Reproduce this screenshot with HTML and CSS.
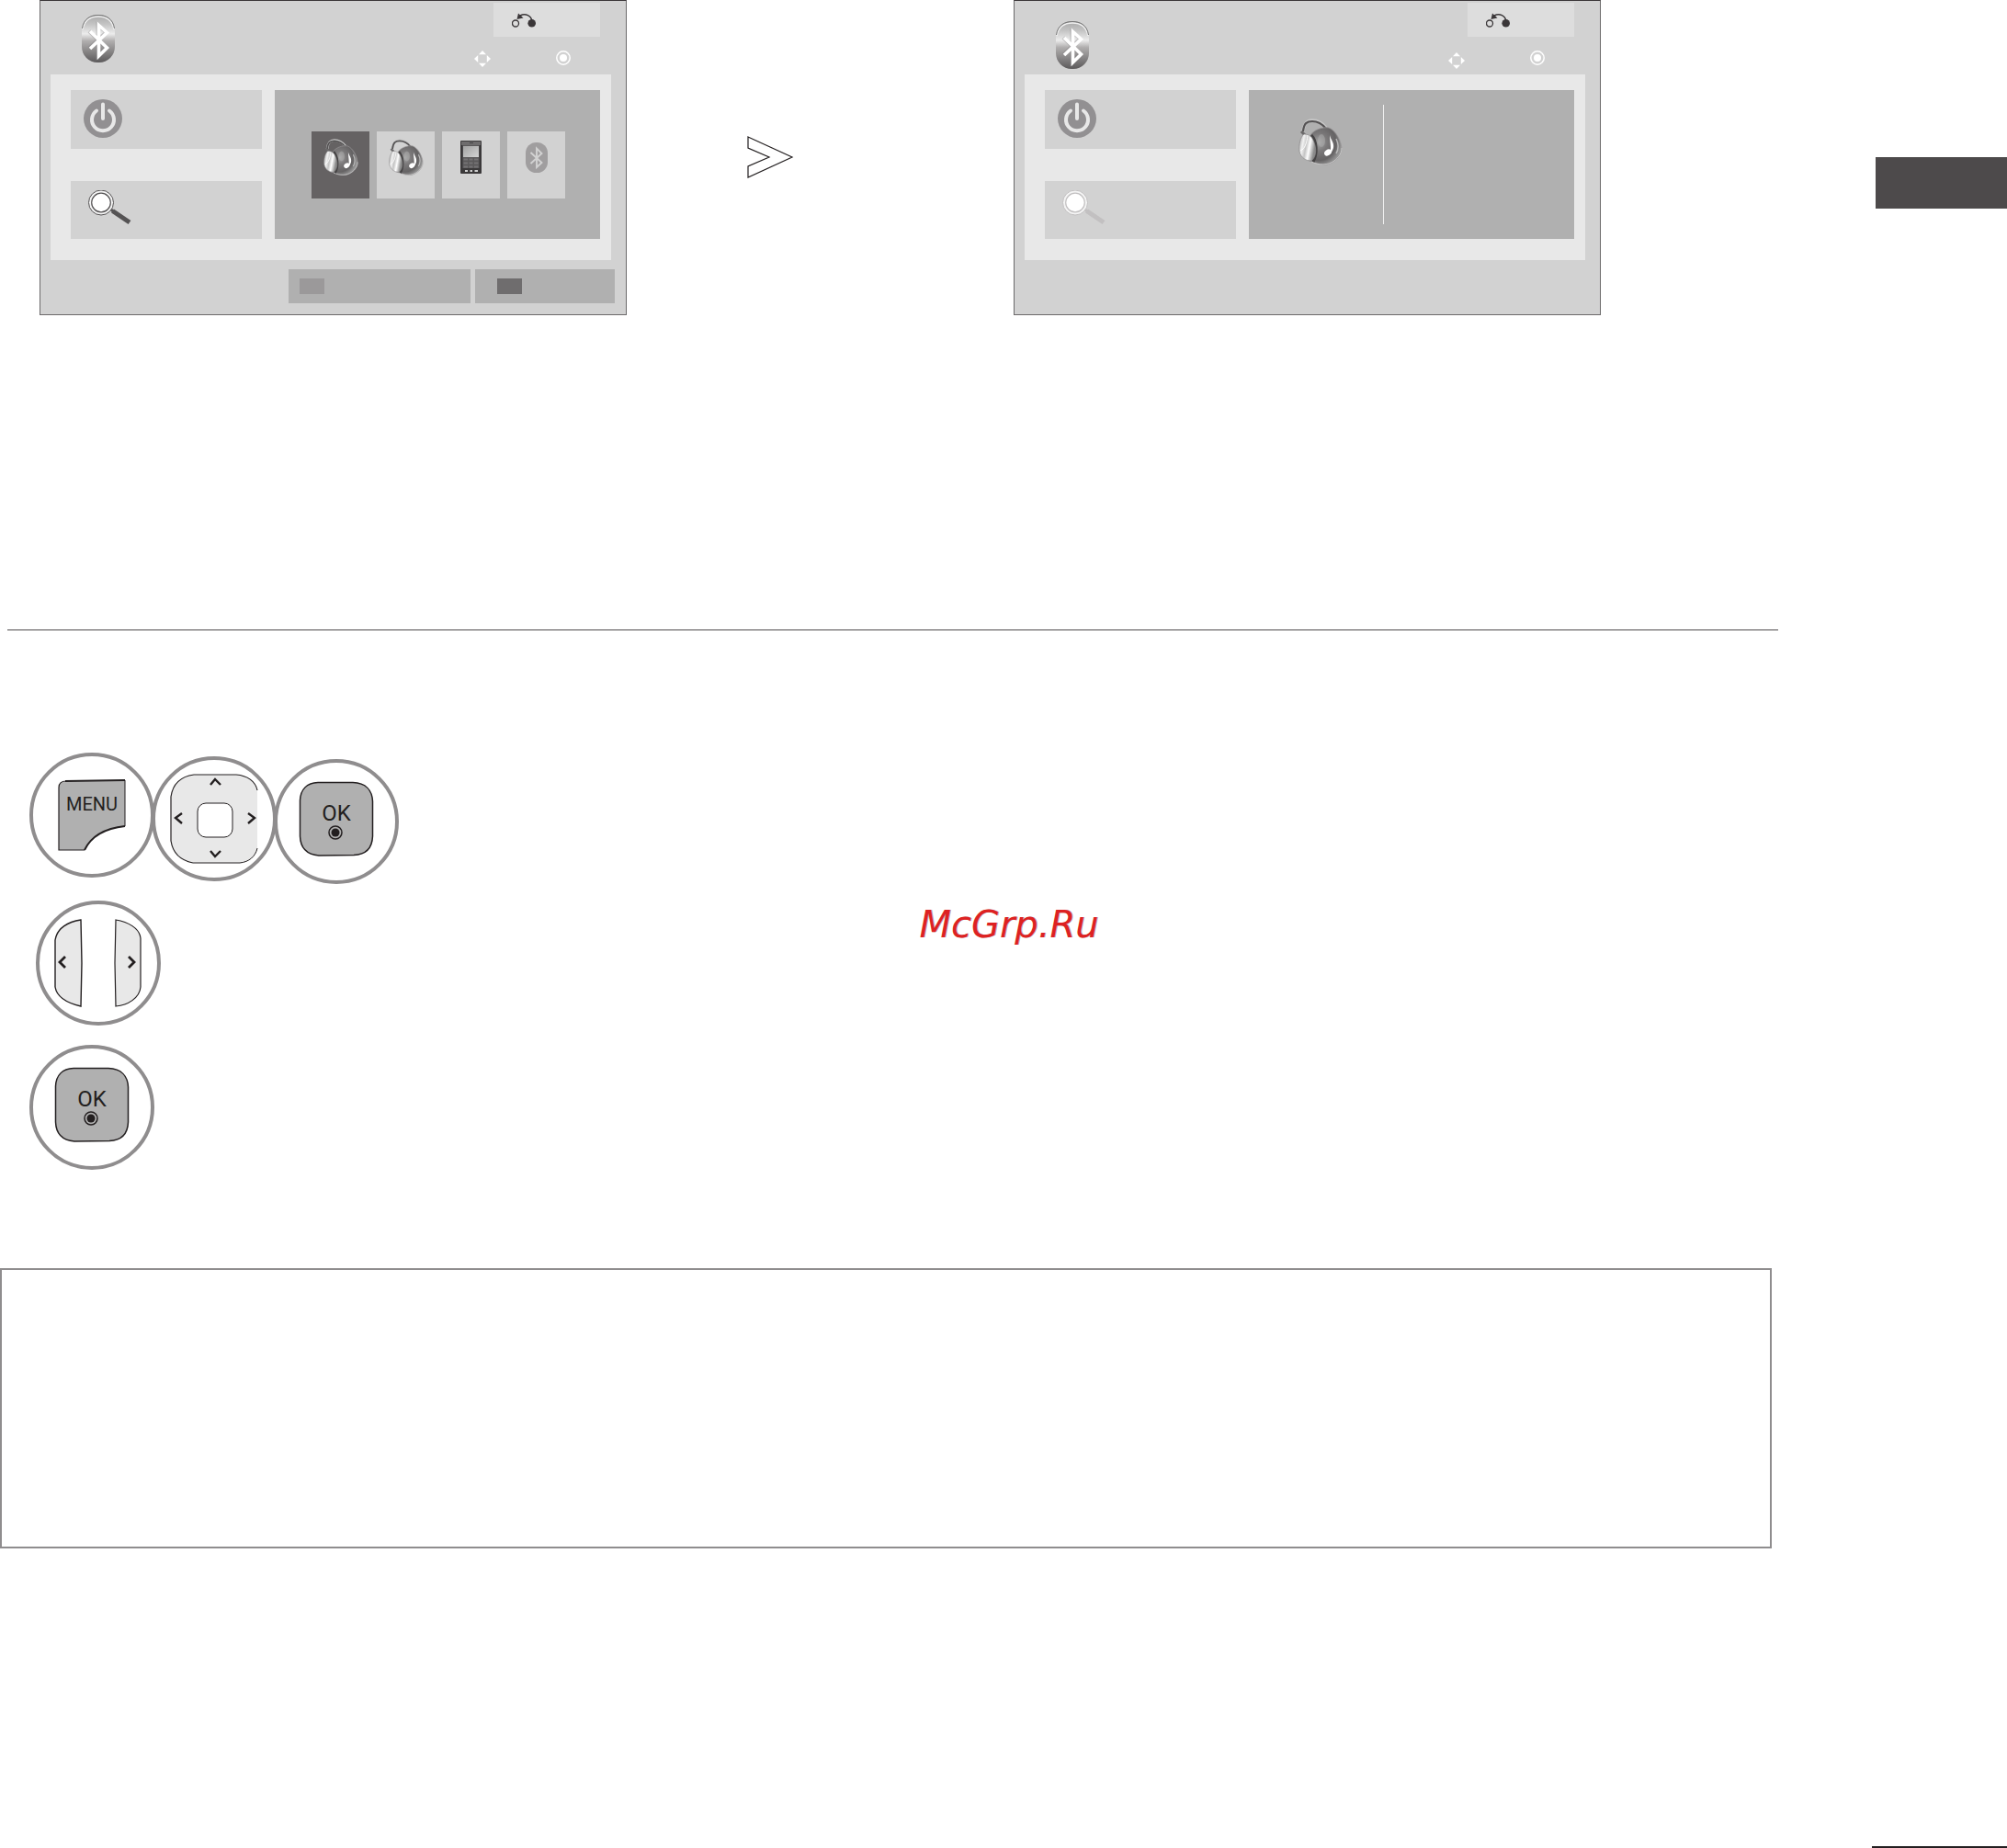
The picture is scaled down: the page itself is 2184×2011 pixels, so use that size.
FILE: index.html
```html
<!DOCTYPE html>
<html lang="en">
  <head>
    <meta charset="UTF-8" />
    <meta name="viewport" content="width=device-width, initial-scale=1.0" />
    <title>Bluetooth</title>
    <link rel="stylesheet" href="styles.css">
  </head>

  <body>
    <!-- Shared icons -->
    <svg class="icon-defs" width="0" height="0" aria-hidden="true">
      <defs>
        <linearGradient id="pill" x1="0" y1="0" x2="0" y2="1">
          <stop offset="0" stop-color="#a8a8a8" />
          <stop offset="0.2" stop-color="#c4c4c4" />
          <stop offset="0.4" stop-color="#ececec" />
          <stop offset="0.55" stop-color="#b0aeae" />
          <stop offset="1" stop-color="#5c5a5b" />
        </linearGradient>
        <radialGradient id="ball" cx="0.35" cy="0.4" r="0.65">
          <stop offset="0" stop-color="#a5a5a5" />
          <stop offset="0.35" stop-color="#7c7a7b" />
          <stop offset="0.75" stop-color="#656364" />
          <stop offset="1" stop-color="#989898" />
        </radialGradient>
        <linearGradient id="cup" x1="0" y1="0" x2="1" y2="0.3">
          <stop offset="0" stop-color="#a0a0a0" />
          <stop offset="0.3" stop-color="#f2f2f2" />
          <stop offset="0.5" stop-color="#c4c4c4" />
          <stop offset="0.7" stop-color="#ffffff" />
          <stop offset="1" stop-color="#8a8a8a" />
        </linearGradient>
        <linearGradient id="glass" x1="0" y1="0" x2="1" y2="1">
          <stop offset="0" stop-color="#a2a2a2" />
          <stop offset="1" stop-color="#d4d4d4" />
        </linearGradient>
        <symbol id="bluetooth" viewBox="0 0 36 52">
          <rect width="36" height="52" rx="17" fill="url(#pill)" />
          <path d="M1 16C3 5 10 2 18 2S33 5 35 16" fill="none" stroke="#f0f0f0" stroke-width="1.5" />
          <path d="M0.500 15C2 4 10 0.500 18 0.500S34 4 35.500 15" fill="none" stroke="#777" stroke-width="1" />
          <path d="M8 36.500L26.500 19 17.500 11.500V45L26.500 35.500 8 18" fill="none" stroke="#8a8889" stroke-width="4" opacity="0.4" />
          <path d="M9 37L27.500 19.500 18.500 11.500V45L27.500 36 9 18" fill="none" stroke="#fff" stroke-width="3.600" />
        </symbol>
        <symbol id="bluetooth-flat" viewBox="0 0 24 33">
          <rect width="24" height="33" rx="11.500" fill="#a09e9f" />
          <path d="M5.500 23L17.500 12 12 6.500V27L17.500 22 5.500 11" fill="none" stroke="#d2d2d2" stroke-width="1.900" />
        </symbol>
        <symbol id="headphones" viewBox="0 0 48 52">
          <path d="M5 14C6 5 9 2 15 2C22 2 26 5 30 10" fill="none" stroke="#c8c8c8" stroke-width="3.400" />
          <path d="M5 14C6 5 9 3 15 3C22 3 26 6 30 11" fill="none" stroke="#555354" stroke-width="2.200" />
          <path d="M13 18C17 12 26 9 33 10C41 13 47 25 47 34C46 42 39 48 31 50C23 51 15 47 9 45Z" fill="url(#ball)" stroke="#9a9899" stroke-width="0.800" />
          <path d="M14 47C22 51 32 51 39 46C44 42 47 38 47 32" fill="none" stroke="#cfcfcf" stroke-width="0.800" />
          <ellipse cx="25" cy="24" rx="4" ry="7" fill="#b4b4b4" opacity="0.450" />
          <path d="M14 18C20 24 21 38 16 47" fill="none" stroke="#454344" stroke-width="3" />
          <path d="M3 14L7 18" stroke="#6a6869" stroke-width="3" />
          <path d="M6 17C2 20 0 29 1 36C3 43 8 46 14 46C19 42 20 34 17 26C15 20 12 17 6 17Z" fill="url(#cup)" stroke="#8d8b8c" stroke-width="0.700" />
          <path d="M2 35C7 33 9 27 10 18" fill="none" stroke="#fff" stroke-width="1" />
          <path d="M41 22C44 28 44 33 41 38" fill="none" stroke="#b8b8b8" stroke-width="1.500" />
          <ellipse cx="32" cy="37" rx="4.200" ry="3.200" transform="rotate(-35 32 37)" fill="#fff" />
          <path d="M34 18C35 23 39 26 38 32C37 35 36 37 34.500 38C36 31 34 25 34 18Z" fill="#fff" />
        </symbol>
        <symbol id="phone" viewBox="0 0 23 36">
          <rect width="23" height="36" rx="1" fill="#3b393a" />
          <rect x="1" y="1" width="21" height="4" fill="#6e6c6d" />
          <rect x="2.500" y="5" width="18" height="25" fill="#5b595a" />
          <rect x="3" y="6" width="17" height="12" fill="url(#glass)" />
          <path d="M3.500 20.500H8M9.500 20.500H13.500M15 20.500H19.500M3.500 24.500H8M9.500 24.500H13.500M15 24.500H19.500M3.500 28.500H8M9.500 28.500H13.500M15 28.500H19.500" stroke="#757374" stroke-width="2" />
          <path d="M10 2.500H14" stroke="#444" stroke-width="1" />
          <path d="M5 33H8M10.500 33H13M15.500 33H19" stroke="#fff" stroke-width="1.400" />
        </symbol>
        <symbol id="power" viewBox="0 0 42 42">
          <circle cx="21" cy="21" r="21" fill="#929092" />
          <path d="M14 12.500A12 12 0 1 0 28 12.500M21 5.500V21" fill="none" stroke="#e8e8e8" stroke-width="4" stroke-linecap="round" />
        </symbol>
        <symbol id="search" viewBox="0 0 48 38">
          <path d="M25 20L28 23" stroke="currentColor" stroke-width="3" />
          <path d="M27.500 22.500L46 35" stroke="currentColor" stroke-width="5" />
          <circle cx="15" cy="13.500" r="13.500" fill="#f4f4f4" stroke="currentColor" stroke-width="1" />
          <circle cx="15" cy="13.500" r="10.300" fill="#fff" stroke="currentColor" stroke-width="1.200" />
        </symbol>
        <symbol id="return" viewBox="0 0 26 16">
          <circle cx="4" cy="11.500" r="3.500" fill="none" stroke="#3a3638" stroke-width="1.300" />
          <circle cx="21.700" cy="11.300" r="4.300" fill="#3a3638" />
          <path d="M22 9C21 3 15 0 9 3" fill="none" stroke="#3a3638" stroke-width="1.500" />
          <path d="M5.500 7L7 0.500 12.500 5.500Z" fill="#3a3638" />
        </symbol>
        <symbol id="move" viewBox="0 0 18 18">
          <path d="M9 0L13 4.200H5ZM9 18L5 13.800H13ZM0 9L4.200 5V13ZM18 9L13.800 13V5Z" fill="#fff" />
        </symbol>
        <symbol id="enter" viewBox="0 0 16 16">
          <circle cx="8" cy="8" r="7.200" fill="none" stroke="#fff" stroke-width="1.500" />
          <circle cx="8" cy="8" r="4" fill="#fff" />
        </symbol>
        <symbol id="ok-shape" viewBox="0 0 82 82">
          <path d="M21 1.500H59C73 2 80 10 80.500 22V60C80 73 73 80 60 80.500L22 81C10 80 2 74 1.500 60V21C2 9 9 2 21 1.500Z" fill="#b0b0b0" stroke="#231f20" stroke-width="1.500" />
          <circle cx="40" cy="56" r="7" fill="none" stroke="#231f20" stroke-width="1.500" />
          <circle cx="40" cy="56" r="4.500" fill="#231f20" />
        </symbol>
      </defs>
    </svg>

    <main class="content">
      <section class="screens">
        <!-- Device list -->
        <div class="screen">
          <div class="screen-header">
            <svg class="logo"><use href="#bluetooth" /></svg>
            <div class="header-tools">
              <button type="button" class="return-btn" aria-label="Return">
                <svg><use href="#return" /></svg>
              </button>
              <div class="hints">
                <svg class="hint-move"><use href="#move" /></svg>
                <svg class="hint-enter"><use href="#enter" /></svg>
              </div>
            </div>
          </div>
          <div class="panel">
            <div class="tiles">
              <button type="button" class="tile" aria-label="Power">
                <svg class="power-icon"><use href="#power" /></svg>
              </button>
              <button type="button" class="tile" aria-label="Search">
                <svg class="search-icon"><use href="#search" /></svg>
              </button>
            </div>
            <div class="pane devices">
              <button type="button" class="device selected" aria-label="Headset 1">
                <svg class="device-headset"><use href="#headphones" /></svg>
              </button>
              <button type="button" class="device" aria-label="Headset 2">
                <svg class="device-headset"><use href="#headphones" /></svg>
              </button>
              <button type="button" class="device" aria-label="Phone">
                <svg class="device-phone"><use href="#phone" /></svg>
              </button>
              <button type="button" class="device" aria-label="Bluetooth device">
                <svg class="device-other"><use href="#bluetooth-flat" /></svg>
              </button>
            </div>
          </div>
          <div class="screen-footer">
            <button type="button" class="action action-wide" aria-label="Option 1"><span class="swatch"></span></button>
            <button type="button" class="action" aria-label="Option 2"><span class="swatch swatch-dark"></span></button>
          </div>
        </div>

        <div class="arrow">
          <svg width="51" height="46" viewBox="0 0 51 46">
            <path d="M1 1L49 23 1 45V33L24 23 1 13Z" fill="#fff" stroke="#231f20" stroke-width="1.200" />
          </svg>
        </div>

        <!-- Connected device -->
        <div class="screen connected">
          <div class="screen-header">
            <svg class="logo"><use href="#bluetooth" /></svg>
            <div class="header-tools">
              <button type="button" class="return-btn" aria-label="Return">
                <svg><use href="#return" /></svg>
              </button>
              <div class="hints">
                <svg class="hint-move"><use href="#move" /></svg>
                <svg class="hint-enter"><use href="#enter" /></svg>
              </div>
            </div>
          </div>
          <div class="panel">
            <div class="tiles">
              <button type="button" class="tile" aria-label="Power">
                <svg class="power-icon"><use href="#power" /></svg>
              </button>
              <button type="button" class="tile" aria-label="Search" disabled>
                <svg class="search-icon"><use href="#search" /></svg>
              </button>
            </div>
            <div class="pane">
              <div class="current">
                <svg><use href="#headphones" /></svg>
              </div>
            </div>
          </div>
          <div class="screen-footer"></div>
        </div>
      </section>

      <hr class="divider" />

      <!-- Remote control keys -->
      <section class="steps">
        <div class="step step-keys">
          <div class="key">
            <button type="button" class="key-btn menu-btn">
              <svg width="74" height="78" viewBox="0 0 74 78">
                <path d="M1 77V9C1 4 4 2 9 2L73 1V51C55 53 37 60 29 77Z" fill="#b0b0b0" />
                <path d="M29 77H1V9C1 4 4 2 9 2" fill="none" stroke="#231f20" stroke-width="1.200" />
                <path d="M8 2L73 1" stroke="#231f20" stroke-width="2" />
                <path d="M73 1V51" stroke="#231f20" stroke-width="1" />
                <path d="M73 51C55 53 37 60 29 77" fill="none" stroke="#231f20" stroke-width="2" />
              </svg>
              <span>MENU</span>
            </button>
          </div>
          <div class="key">
            <button type="button" class="key-btn" aria-label="Navigate">
              <svg width="96" height="98" viewBox="0 0 96 98">
                <path d="M26 1H72C84 2 93 8 95 18V81C93 90 86 96 76 97H25C10 94 3 86 1 73V25C3 11 12 3 26 1Z" fill="#e8e8e8" />
                <path d="M95 18C93 8 84 2 72 1H26C12 3 3 11 1 25V73C3 86 10 94 25 97" fill="none" stroke="#231f20" stroke-width="1.200" />
                <path d="M25 97H76C86 96 93 90 95 81" fill="none" stroke="#231f20" stroke-width="1" />
                <rect x="30" y="32" width="38" height="37" rx="9" fill="#fff" stroke="#231f20" stroke-width="1" />
                <path d="M44 12L49 6 55 12M44 84L49 90 55 84M13 43L6 48 13 54M85 43L92 48 85 54" fill="none" stroke="#231f20" stroke-width="2.400" />
              </svg>
            </button>
          </div>
          <div class="key key-ok">
            <button type="button" class="key-btn ok-btn">
              <svg width="82" height="82"><use href="#ok-shape" /></svg>
              <span>OK</span>
            </button>
          </div>
        </div>

        <div class="step step-arrows">
          <div class="key">
            <button type="button" class="key-btn" aria-label="Left">
              <svg width="31" height="96" viewBox="0 0 31 96">
                <path d="M29 1C15 3 3 10 1 23V74C3 86 16 92 29 95L30 48Z" fill="#e8e8e8" stroke="#231f20" stroke-width="1.400" />
                <path d="M12 41L6 47 12 53" fill="none" stroke="#231f20" stroke-width="2.800" />
              </svg>
            </button>
            <button type="button" class="key-btn" aria-label="Right">
              <svg width="31" height="96" viewBox="0 0 31 96">
                <path d="M2 1C15 3 28 10 29 21V74C28 86 15 94 2 95L1 48Z" fill="#e8e8e8" stroke="#231f20" stroke-width="1.200" />
                <path d="M16 41L22 47 16 53" fill="none" stroke="#231f20" stroke-width="2.800" />
              </svg>
            </button>
          </div>
        </div>

        <div class="step">
          <div class="key key-ok">
            <button type="button" class="key-btn ok-btn">
              <svg width="82" height="82"><use href="#ok-shape" /></svg>
              <span>OK</span>
            </button>
          </div>
        </div>
      </section>

      <section class="note"></section>
    </main>

    <aside class="side">
      <div class="side-tab"></div>
      <div class="side-rule"></div>
    </aside>

    <div class="watermark">McGrp.Ru</div>
  </body>
</html>
```

FILE: styles.css
```css
* {
  box-sizing: border-box;
}

body {
  position: relative;
  display: flex;
  min-height: 100vh;
  margin: 0;
  background-color: #fff;
  font-family: Roboto, Arial, sans-serif;
}

button {
  margin: 0;
  padding: 0;
  border: none;
  background: none;
  color: #231f20;
  font-family: inherit;
  cursor: pointer;
}

svg {
  display: block;
  flex-shrink: 0;
}

.icon-defs {
  position: absolute;
}

.content {
  flex: 1;
  padding-right: 102px;
}

/* TV screens */
.screens {
  display: grid;
  grid-template-columns: 639fr 421fr 639fr;
  padding: 0 193px 0 43px;
}

.screen {
  border: 1px solid #6b696a;
  border-top-color: #3a3638;
  background-color: #d2d2d2;
}

.screen-header {
  display: flex;
  justify-content: space-between;
  height: 80px;
  padding: 0 28px 0 45px;
}

.logo {
  width: 36px;
  height: 52px;
  margin-top: 15px;
}

.connected .logo {
  margin-top: 22px;
}

.header-tools {
  display: flex;
  flex-direction: column;
  align-items: flex-end;
  gap: 15px;
  padding-top: 2px;
}

.return-btn {
  width: 116px;
  height: 37px;
  padding: 0 20px;
  background-color: #dddddd;
}

.return-btn svg {
  width: 26px;
  height: 16px;
}

.hints {
  display: flex;
  gap: 71px;
  padding-right: 32px;
}

.hint-move {
  width: 18px;
  height: 18px;
}

.hint-enter {
  width: 16px;
  height: 16px;
}

.connected .hint-move {
  margin-top: 2px;
}

.panel {
  display: flex;
  gap: 14px;
  margin: 0 16px 0 11px;
  padding: 17px 12px 23px 22px;
  background-color: #e8e8e8;
}

.tiles {
  display: grid;
  grid-template-rows: 64px 63px;
  gap: 35px;
  width: 208px;
}

.tile {
  display: flex;
  align-items: flex-start;
  padding: 10px 14px;
  background-color: #d2d2d2;
}

.power-icon {
  width: 42px;
  height: 42px;
}

.search-icon {
  width: 48px;
  height: 38px;
  margin-left: 4px;
  overflow: visible;
  color: #555354;
}

.tile:disabled .search-icon {
  color: #c2c0c1;
}

.pane {
  display: flex;
  flex: 1;
  background-color: #b0b0b0;
}

.devices {
  align-items: flex-start;
  gap: 8px;
  padding: 45px 38px 0 40px;
}

.device {
  display: flex;
  flex: 1;
  justify-content: center;
  align-items: center;
  height: 73px;
  padding-bottom: 17px;
  background-color: #d2d2d2;
}

.device.selected {
  background-color: #656263;
}

.device-headset {
  width: 38px;
  height: 41px;
}

.device-phone {
  width: 23px;
  height: 36px;
}

.device-other {
  width: 24px;
  height: 33px;
}

.current {
  width: 147px;
  margin: 16px 0;
  padding: 15px 0 0 54px;
  border-right: 1px solid #f0f0f0;
}

.current svg {
  width: 48px;
  height: 52px;
}

.screen-footer {
  display: flex;
  justify-content: flex-end;
  gap: 5px;
  height: 59px;
  padding: 10px 12px 12px;
}

.action {
  display: flex;
  align-items: center;
  width: 152px;
  padding-left: 24px;
  background-color: #b0b0b0;
}

.action-wide {
  width: 198px;
  padding-left: 12px;
}

.swatch {
  width: 27px;
  height: 17px;
  background-color: #9b999a;
}

.swatch-dark {
  background-color: #6f6d6e;
}

.arrow {
  padding: 148px 0 0 131px;
}

.divider {
  height: 1px;
  margin: 342px 0 133px 8px;
  border: none;
  background-color: #4d4a4b;
}

/* Remote keys */
.steps {
  padding-left: 32px;
}

.step {
  display: flex;
}

.step-keys {
  height: 143px;
  margin-bottom: 18px;
}

/* keys step down slightly from left to right */
.step-keys .key:nth-child(2) {
  align-self: center;
}

.step-keys .key:nth-child(3) {
  align-self: flex-end;
}

.step-keys .key + .key {
  margin-left: -3px;
}

.step-arrows {
  margin-bottom: 21px;
  padding-left: 7px;
}

.step-arrows .key {
  gap: 34px;
}

.key {
  display: flex;
  justify-content: center;
  align-items: center;
  width: 136px;
  height: 136px;
  border: 4px solid #8f8d8e;
  border-radius: 50%;
}

.key-ok {
  padding-bottom: 6px;
}

.key-btn {
  display: grid;
  justify-items: center;
}

.key-btn svg,
.key-btn span {
  grid-area: 1 / 1;
}

.menu-btn {
  font-size: 20px;
  line-height: 20px;
}

.menu-btn span {
  padding-top: 17px;
}

.ok-btn {
  font-size: 24px;
  line-height: 24px;
}

.ok-btn span {
  padding-top: 23px;
}

.note {
  height: 305px;
  margin: 107px 7px 0 0;
  border: 2px solid #8f8d8e;
}

/* Page edge */
.side {
  display: flex;
  flex-direction: column;
  justify-content: space-between;
  width: 147px;
  padding-top: 171px;
}

.side-tab {
  height: 56px;
  margin-left: 4px;
  background-color: #4d4a4b;
}

.side-rule {
  height: 2px;
  background-color: #231f20;
}

.watermark {
  position: absolute;
  top: 50%;
  left: 50%;
  padding-left: 12px;
  transform: translate(-50%, -50%);
  color: #dd2222;
  font-family: "DejaVu Sans", sans-serif;
  font-size: 40px;
  font-style: italic;
  line-height: 48px;
  text-shadow: 1px 0 0 rgba(58, 32, 48, 0.4);
}
```
